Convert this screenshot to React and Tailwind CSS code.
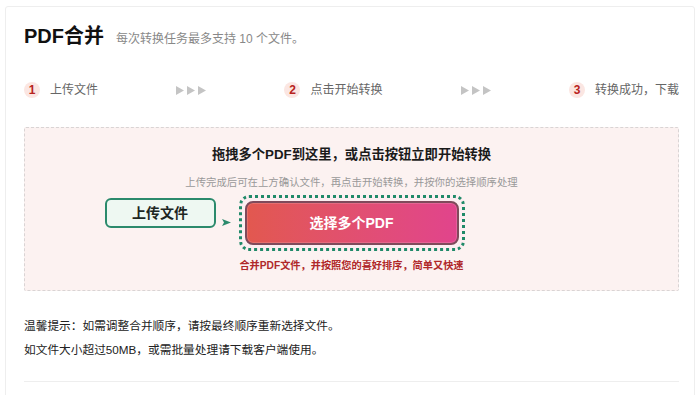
import React from 'react';

const font = { fontFamily: '"Liberation Sans", "Noto Sans CJK SC", sans-serif' };

function Arrows() {
  return (
    <div className="flex items-center gap-[3px]">
      {[0, 1, 2].map((i) => (
        <svg key={i} width="8" height="9" viewBox="0 0 8 9">
          <path d="M0 0 L8 4.5 L0 9 Z" fill="#c4c4c4" />
        </svg>
      ))}
    </div>
  );
}

function Step({ n, label }) {
  return (
    <div className="flex items-center gap-[10px]">
      <span className="w-[16px] h-[16px] rounded-full bg-[#fbe6e2] text-[#b8231d] text-[12px] font-bold leading-none flex items-center justify-center">
        {n}
      </span>
      <span className="text-[12px] leading-[16px] text-[#666] whitespace-nowrap">{label}</span>
    </div>
  );
}

export default function App() {
  return (
    <div className="h-[395px] bg-white pt-[6px] px-[5px] overflow-hidden" style={font}>
      <div className="border border-[#eeeeee] rounded-[3px] pl-[18px] pr-[15px] pt-[15px] h-[420px]">
        <div className="flex items-baseline gap-[12px]">
          <h1 className="text-[20px] leading-[28px] font-bold text-[#111]">PDF合并</h1>
          <span className="text-[12px] text-[#888]">每次转换任务最多支持 10 个文件。</span>
        </div>

        <div className="mt-[32px] flex items-center justify-between">
          <Step n="1" label="上传文件" />
          <Arrows />
          <Step n="2" label="点击开始转换" />
          <Arrows />
          <Step n="3" label="转换成功，下载" />
        </div>

        <div className="mt-[29px] border border-dashed border-[#d9d4d4] bg-[#fcf2f1] rounded-[2px] pt-[19px] pb-[17px] flex flex-col items-center">
          <div className="text-[13.3px] leading-[16px] font-bold text-[#1a1a1a]">
            拖拽多个PDF到这里，或点击按钮立即开始转换
          </div>
          <div className="mt-[13px] text-[10.4px] leading-[14px] text-[#999]">
            上传完成后可在上方确认文件，再点击开始转换，并按你的选择顺序处理
          </div>

          <div className="relative mt-[5px]">
            <div className="absolute right-[calc(100%+23px)] top-[3px] w-[111px] h-[30px] border-2 border-[#2b8a6c] bg-[#eef8f2] rounded-[6px] flex items-center justify-center text-[14px] font-bold text-[#1d2622]">
              上传文件
            </div>
            <svg className="absolute right-[calc(100%+8px)] top-[24px]" width="9" height="7" viewBox="0 0 9 7">
              <path d="M0 0 L9 3.5 L0 7 L2 3.5 Z" fill="#2b8a6c" />
            </svg>
            <div className="border-[3px] border-dotted border-[#1f8a68] rounded-[10px] p-[3px] bg-[#fdeef1]">
              <button className="w-[214px] h-[44px] rounded-[8px] border-2 border-[#7f4a5b] bg-gradient-to-r from-[#e2584f] to-[#e1448c] text-white text-[14px] font-bold shadow-[inset_0_0_0_1px_rgba(255,255,255,0.15)]">
                选择多个PDF
              </button>
            </div>
          </div>

          <div className="mt-[8px] text-[10.2px] leading-[14px] font-bold text-[#b0282a]">
            合并PDF文件，并按照您的喜好排序，简单又快速
          </div>
        </div>

        <div className="mt-[23px] text-[11.7px] leading-[24px] text-[#222]">
          <p>温馨提示：如需调整合并顺序，请按最终顺序重新选择文件。</p>
          <p>如文件大小超过50MB，或需批量处理请下载客户端使用。</p>
        </div>

        <div className="mt-[19px] border-t border-[#eeeeee]" />
      </div>
    </div>
  );
}
